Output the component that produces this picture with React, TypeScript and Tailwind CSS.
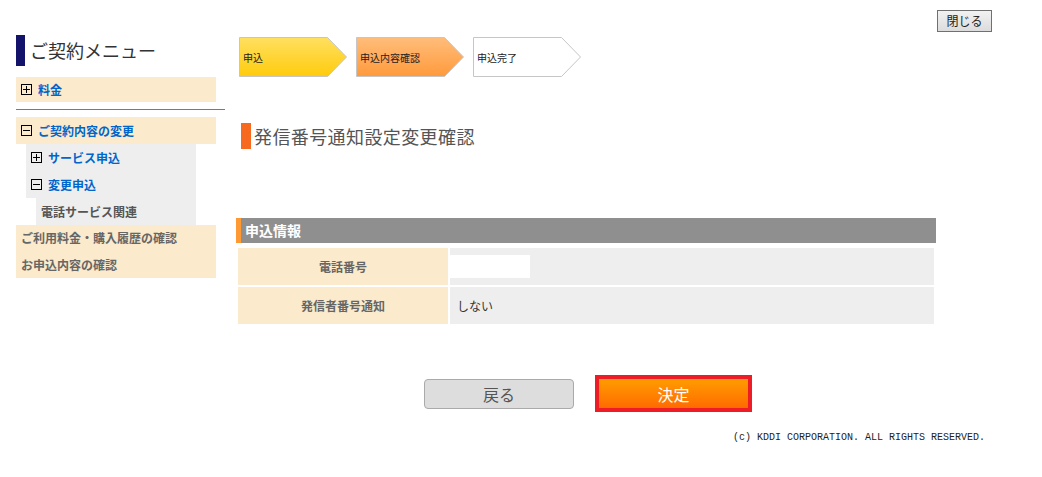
import React from 'react';

const jp = { fontFamily: '"Noto Sans CJK JP", "Noto Sans", sans-serif' };

const BoxIcon: React.FC<{ open?: boolean }> = ({ open }) => (
  <svg width="11" height="11" viewBox="0 0 11 11" className="shrink-0">
    <rect x="0.5" y="0.5" width="10" height="10" fill="none" stroke="#000" />
    <line x1="2" y1="5.5" x2="9" y2="5.5" stroke="#000" />
    {!open && <line x1="5.5" y1="2" x2="5.5" y2="9" stroke="#000" />}
  </svg>
);

interface StepProps {
  label: string;
  id: string;
  top: string;
  bottom: string;
}

const Step: React.FC<StepProps> = ({ label, id, top, bottom }) => (
  <div className="relative w-[109px] h-[40px] flex items-center">
    <svg width="109" height="40" viewBox="0 0 109 40" className="absolute inset-0">
      <defs>
        <linearGradient id={id} x1="0" y1="0" x2="0" y2="1">
          <stop offset="0" stopColor={top} />
          <stop offset="1" stopColor={bottom} />
        </linearGradient>
      </defs>
      <polygon
        points="0.5,0.5 88.5,0.5 107.5,20 88.5,39.5 0.5,39.5"
        fill={`url(#${id})`}
        stroke="#c6c6c6"
      />
    </svg>
    <span className="relative pl-[4px] text-[10px] text-[#222]">{label}</span>
  </div>
);

const App: React.FC = () => {
  return (
    <div className="w-[1042px] h-[477px] bg-white text-[#333]" style={jp}>
      {/* close */}
      <div className="flex justify-end pt-[10px] pr-[50px]">
        <button
          type="button"
          className="w-[55px] h-[22px] border border-[#707070] bg-gradient-to-b from-[#f2f2f2] to-[#dcdcdc] text-[12px] text-[#222] leading-none"
        >
          閉じる
        </button>
      </div>

      <div className="flex pt-[3px]">
        {/* sidebar */}
        <div className="ml-[16px] w-[209px] shrink-0">
          <div className="flex items-center h-[31px]">
            <div className="w-[9px] h-full bg-[#13136b]" />
            <span className="ml-[5px] text-[18px] text-[#333]">ご契約メニュー</span>
          </div>

          <div className="mt-[11px] w-[200px] h-[25px] bg-[#fbeacb] flex items-center pl-[5px] gap-[6px]">
            <BoxIcon />
            <span className="text-[12px] font-bold text-[#0066cc]">料金</span>
          </div>

          <div className="mt-[7px] h-[1px] bg-[#7a7a7a] w-[209px]" />

          <div className="mt-[7px] w-[200px] h-[27px] bg-[#fbeacb] flex items-center pl-[5px] gap-[6px]">
            <BoxIcon open />
            <span className="text-[12px] font-bold text-[#0066cc]">ご契約内容の変更</span>
          </div>

          <div className="ml-[10px] w-[170px] bg-[#eeeeee]">
            <div className="h-[27px] flex items-center pl-[5px] gap-[6px]">
              <BoxIcon />
              <span className="text-[12px] font-bold text-[#0066cc]">サービス申込</span>
            </div>
            <div className="h-[27px] flex items-center pl-[5px] gap-[6px]">
              <BoxIcon open />
              <span className="text-[12px] font-bold text-[#0066cc]">変更申込</span>
            </div>
          </div>
          <div className="ml-[20px] w-[160px] h-[27px] bg-[#eeeeee] flex items-center pl-[5px]">
            <span className="text-[12px] font-bold text-[#555]">電話サービス関連</span>
          </div>

          <div className="w-[200px] bg-[#fbeacb]">
            <div className="h-[26px] flex items-center pl-[5px]">
              <span className="text-[12px] font-bold text-[#666]">ご利用料金・購入履歴の確認</span>
            </div>
            <div className="h-[27px] flex items-center pl-[5px]">
              <span className="text-[12px] font-bold text-[#666]">お申込内容の確認</span>
            </div>
          </div>
        </div>

        {/* main */}
        <div className="ml-[11px] w-[700px]">
          <div className="flex gap-[8px] pl-[3px] pt-[2px]">
            <Step label="申込" id="g1" top="#ffe060" bottom="#ffcb0c" />
            <Step label="申込内容確認" id="g2" top="#ffbd7a" bottom="#ff9a3c" />
            <Step label="申込完了" id="g3" top="#ffffff" bottom="#ffffff" />
          </div>

          <div className="mt-[46px] pl-[5px] flex items-center h-[26px]">
            <div className="w-[10px] h-full bg-[#f7691f]" />
            <span className="ml-[3px] text-[18px] text-[#555] tracking-[0.4px]">発信番号通知設定変更確認</span>
          </div>

          <div className="mt-[69px] h-[25px] bg-[#8f8f8f] border-l-[5px] border-[#ff9933] flex items-center pl-[4px]">
            <span className="text-[14px] font-bold text-white">申込情報</span>
          </div>

          <div className="mt-[5px] ml-[2px] w-[696px] flex flex-col gap-[2px]">
            <div className="flex gap-[2px] h-[37px]">
              <div className="w-[210px] bg-[#fbeacb] flex items-center justify-center">
                <span className="text-[12px] font-bold text-[#666]">電話番号</span>
              </div>
              <div className="flex-1 bg-[#eeeeee] flex items-center">
                <div className="w-[80px] h-[23px] bg-white" />
              </div>
            </div>
            <div className="flex gap-[2px] h-[37px]">
              <div className="w-[210px] bg-[#fbeacb] flex items-center justify-center">
                <span className="text-[12px] font-bold text-[#666]">発信者番号通知</span>
              </div>
              <div className="flex-1 bg-[#eeeeee] flex items-center pl-[7px]">
                <span className="text-[12px] text-[#333]">しない</span>
              </div>
            </div>
          </div>

          <div className="mt-[51px] flex justify-center items-center gap-[21px] pl-[4px]">
            <button
              type="button"
              className="w-[150px] h-[30px] rounded-[4px] border border-[#aaaaaa] bg-[#dddddd] text-[16px] text-[#555] leading-none"
            >
              戻る
            </button>
            <div className="w-[157px] h-[37px] border-[4px] border-[#ee1c25] bg-gradient-to-b from-[#ff9c00] to-[#ff6a00] flex items-center justify-center">
              <span className="text-[16px] text-white">決定</span>
            </div>
          </div>
        </div>
      </div>

      <div className="mt-[9px] pr-[57px] text-right">
        <span className="text-[10px] text-[#222]" style={{ fontFamily: '"Liberation Mono", monospace' }}>
          (c) KDDI CORPORATION. ALL RIGHTS RESERVED.
        </span>
      </div>
    </div>
  );
};

export default App;
